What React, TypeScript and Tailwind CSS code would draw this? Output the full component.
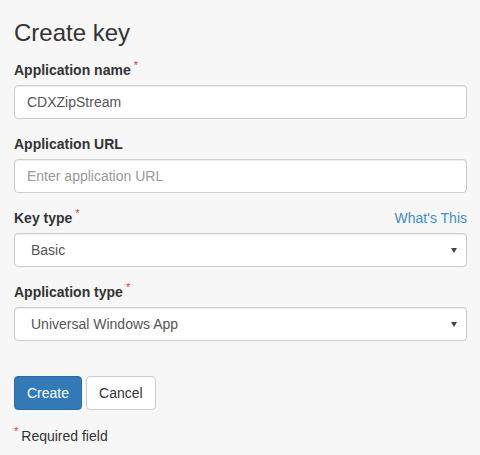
import React from "react";

function Req() {
  return <span className="ml-[3px] relative -top-[6px] text-[11px] leading-[0] font-normal text-[#e9322d]">*</span>;
}

function Label({ children, req }: { children: React.ReactNode; req?: boolean }) {
  return (
    <label className="block h-[20px] text-[14px] leading-[20px] font-bold text-[#333] mb-[5px]">
      {children}
      {req && <Req />}
    </label>
  );
}

function TextBox({ value, placeholder }: { value?: string; placeholder?: string }) {
  return (
    <div className="h-[34px] bg-white border border-[#ccc] rounded-[4px] px-[12px] flex items-center text-[14px] leading-[20px] shadow-[inset_0_1px_1px_rgba(0,0,0,0.075)]">
      {value ? <span className="text-[#555]">{value}</span> : <span className="text-[#999]">{placeholder}</span>}
    </div>
  );
}

function SelectBox({ value }: { value: string }) {
  return (
    <div className="h-[34px] bg-white border border-[#ccc] rounded-[4px] pl-[16px] pr-[8px] flex items-center justify-between text-[14px] leading-[20px] shadow-[inset_0_1px_1px_rgba(0,0,0,0.075)]">
      <span className="text-[#555]">{value}</span>
      <svg width="6" height="5" viewBox="0 0 6 5" className="mr-[1px] mt-[1px]">
        <polygon points="0,0 6,0 3,5" fill="#444" />
      </svg>
    </div>
  );
}

export default function App() {
  return (
    <div
      className="w-[480px] h-[455px] bg-[#f7f7f7] pl-[14px] pr-[13px] overflow-hidden text-[#333]"
      style={{ fontFamily: '"Liberation Sans", Arial, sans-serif' }}
    >
      <h3 className="pt-[20px] h-[46px] text-[24px] leading-[26px] font-normal text-[#333] mb-[14px]">Create key</h3>

      <div className="mb-[15px]">
        <Label req>Application name</Label>
        <TextBox value="CDXZipStream" />
      </div>

      <div className="mb-[15px]">
        <Label>Application URL</Label>
        <TextBox placeholder="Enter application URL" />
      </div>

      <div className="mb-[15px]">
        <div className="flex justify-between items-start h-[25px]">
          <Label req>Key type</Label>
          <a className="text-[14px] leading-[20px] text-[#428bca]" href="#">
            What's This
          </a>
        </div>
        <SelectBox value="Basic" />
      </div>

      <div className="mb-[35px]">
        <Label req>Application type</Label>
        <SelectBox value="Universal Windows App" />
      </div>

      <div className="flex gap-[4px]">
        <button className="h-[34px] px-[12px] text-[14px] leading-[20px] text-white bg-[#337ab7] border border-[#2e6da4] rounded-[4px]">
          Create
        </button>
        <button className="h-[34px] px-[12px] text-[14px] leading-[20px] text-[#333] bg-white border border-[#ccc] rounded-[4px]">
          Cancel
        </button>
      </div>

      <p className="mt-[16px] h-[20px] text-[14px] leading-[20px] text-[#333]">
        <span className="relative -top-[6px] text-[11px] leading-[0] text-[#e9322d] mr-[3px]">*</span>
        Required field
      </p>
    </div>
  );
}
